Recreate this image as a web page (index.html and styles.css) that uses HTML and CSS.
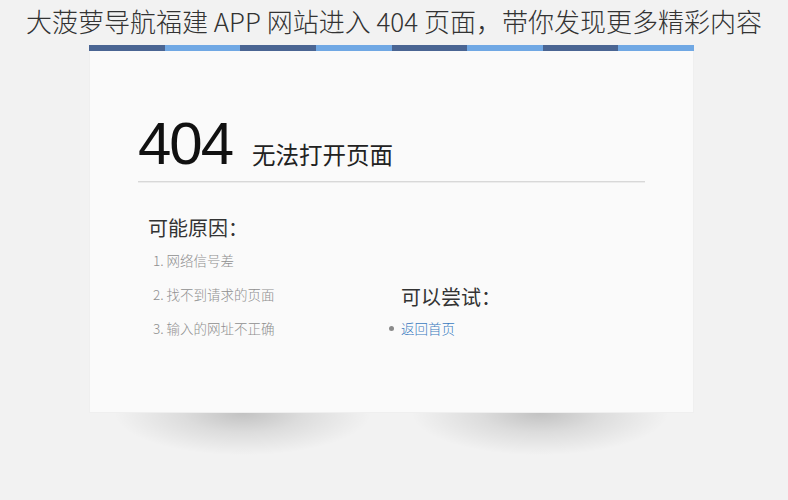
FILE: index.html
```html
<!DOCTYPE html>
<html lang="zh-CN">
<head>
<meta charset="utf-8">
<title>404</title>
<link rel="stylesheet" href="styles.css">
</head>
<body>
<h1 class="page-title">大菠萝导航福建 APP 网站进入 404 页面，带你发现更多精彩内容</h1>
<div class="card-wrap">
  <div class="card">
    <div class="stripe">
      <span class="seg dark"></span><span class="seg light"></span>
      <span class="seg dark"></span><span class="seg light"></span>
      <span class="seg dark"></span><span class="seg light"></span>
      <span class="seg dark"></span><span class="seg light"></span>
    </div>
    <div class="body">
      <div class="head">
        <span class="code">404</span>
        <span class="msg">无法打开页面</span>
      </div>
      <div class="rule"></div>
      <div class="cols">
        <div class="reasons">
          <h2 class="sub">可能原因：</h2>
          <ol class="list">
            <li>1. 网络信号差</li>
            <li>2. 找不到请求的页面</li>
            <li>3. 输入的网址不正确</li>
          </ol>
        </div>
        <div class="tries">
          <h2 class="sub">可以尝试：</h2>
          <ul class="links">
            <li><a href="#">返回首页</a></li>
          </ul>
        </div>
      </div>
    </div>
  </div>
  <div class="shadows">
    <div class="shadow"></div>
    <div class="shadow"></div>
  </div>
</div>
</body>
</html>
```
FILE: styles.css
```css
html, body {
  margin: 0;
  padding: 0;
}
html {
  background: #f2f2f2;
}
body {
  font-family: "Noto Sans CJK SC", "Noto Sans", sans-serif;
  font-weight: 300;
  color: #333;
}
.page-title {
  margin: 0;
  padding-top: 4px;
  height: 41px;
  font-size: 26px;
  line-height: 34px;
  font-weight: 300;
  text-align: center;
  color: #333;
}
.card-wrap {
  width: 605px;
  margin-left: 89px;
}
.shadows {
  display: flex;
  justify-content: space-between;
  padding: 0 14px;
  height: 46px;
}
.shadow {
  width: 280px;
  height: 46px;
  background: radial-gradient(ellipse at 50% 0%, rgba(0, 0, 0, 0.2) 0%, rgba(0, 0, 0, 0.09) 30%, rgba(0, 0, 0, 0) 65%);
}
.card {
  background: #fafafa;
  border: 1px solid #efefef;
  border-top: 0;
}
.stripe {
  display: flex;
  height: 6px;
  margin: 0 -1px;
}
.seg {
  flex: 1;
}
.seg.dark { background: #4a6593; }
.seg.light { background: #70a8e4; }
.body {
  padding: 63px 48px 67px 48px;
}
.head {
  display: flex;
  align-items: baseline;
  height: 60px;
}
.code {
  font-family: "Liberation Sans", Arial, sans-serif;
  font-weight: normal;
  font-size: 60px;
  line-height: 60px;
  letter-spacing: -2px;
  color: #111;
}
.msg {
  margin-left: 20px;
  font-size: 23.5px;
  line-height: 30px;
  font-weight: 400;
  color: #222;
}
.rule {
  margin-top: 7px;
  width: 507px;
  height: 1px;
  background: #d8d8d8;
  border-bottom: 1px solid #ececec;
}
.cols {
  display: flex;
  align-items: flex-end;
  margin-top: 31px;
}
.reasons {
  width: 251px;
  padding-left: 10px;
}
.sub {
  margin: 0;
  font-size: 20px;
  line-height: 28px;
  font-weight: 400;
  color: #333;
}
.list {
  list-style: none;
  margin: 1px 0 0 0;
  padding: 0 0 0 5px;
}
.list li {
  font-size: 13.5px;
  line-height: 34px;
  color: #8f8f8f;
}
.tries {
  padding-left: 2px;
}
.links {
  list-style: none;
  margin: 0;
  padding: 0;
}
.links li {
  position: relative;
  font-size: 13.5px;
  line-height: 34px;
}
.links li::before {
  content: "";
  position: absolute;
  left: -12px;
  top: 15px;
  width: 5px;
  height: 5px;
  border-radius: 50%;
  background: #8a8a8a;
}
.links a {
  color: #3a7bbf;
  text-decoration: none;
}
```
